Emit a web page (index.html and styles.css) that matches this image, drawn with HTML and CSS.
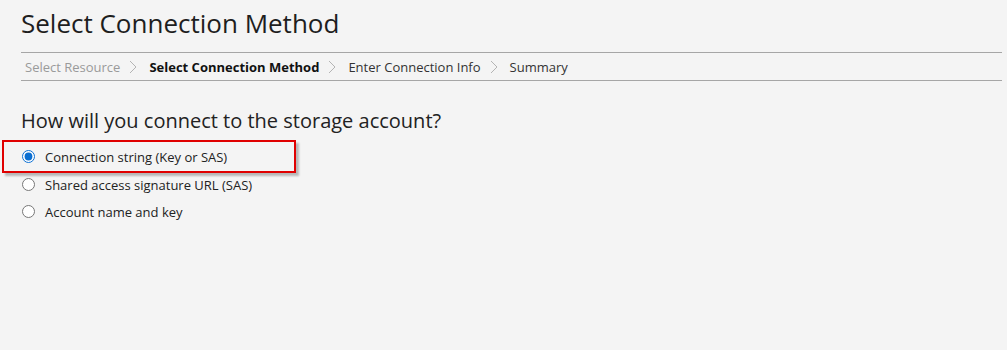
FILE: index.html
```html
<!DOCTYPE html>
<html>
<head>
<meta charset="utf-8">
<link rel="stylesheet" href="styles.css">
</head>
<body>
<div class="page">
  <h1 class="title">Select Connection Method</h1>
  <nav class="crumbs">
    <span class="crumb done">Select Resource</span>
    <svg class="chev" width="8" height="14" viewBox="0 0 8 14"><path d="M1 1 L7 7 L1 13" fill="none" stroke="#b4b4b4" stroke-width="1"/></svg>
    <span class="crumb current">Select Connection Method</span>
    <svg class="chev" width="8" height="14" viewBox="0 0 8 14"><path d="M1 1 L7 7 L1 13" fill="none" stroke="#b4b4b4" stroke-width="1"/></svg>
    <span class="crumb">Enter Connection Info</span>
    <svg class="chev" width="8" height="14" viewBox="0 0 8 14"><path d="M1 1 L7 7 L1 13" fill="none" stroke="#b4b4b4" stroke-width="1"/></svg>
    <span class="crumb">Summary</span>
  </nav>
  <h2 class="question">How will you connect to the storage account?</h2>
  <div class="options">
    <label class="option highlighted"><input type="radio" name="m" checked><span>Connection string (Key or SAS)</span></label>
    <label class="option"><input type="radio" name="m"><span>Shared access signature URL (SAS)</span></label>
    <label class="option"><input type="radio" name="m"><span>Account name and key</span></label>
  </div>
</div>
</body>
</html>
```
FILE: styles.css
```css
html, body {
  margin: 0;
  padding: 0;
  background: #f4f4f4;
  height: 100%;
}
body {
  font-family: "Open Sans", "Noto Sans", sans-serif;
  color: #222;
}
.page {
  padding: 0 5px 0 21px;
}
.title {
  margin: 0;
  padding-top: 4px;
  font-size: 26px;
  font-weight: 400;
  line-height: 38px;
  height: 48px;
  color: #1e1e1e;
}
.crumbs {
  display: flex;
  align-items: center;
  border-top: 1px solid #a6a6a6;
  border-bottom: 1px solid #a6a6a6;
  height: 27px;
  padding-left: 4px;
  font-size: 13px;
}
.crumb {
  color: #333;
  white-space: nowrap;
}
.crumb.done {
  color: #9a9a9a;
}
.crumb.current {
  font-weight: 700;
  color: #111;
}
.chev {
  margin: 0 12px 0 9px;
  flex: none;
}
.question {
  margin: 0;
  padding-top: 27px;
  font-size: 20px;
  font-weight: 400;
  line-height: 26px;
  color: #222;
}
.options {
  display: flex;
  flex-direction: column;
  padding-top: 8px;
}
.option {
  display: flex;
  align-items: center;
  height: 27px;
  font-size: 13px;
  color: #222;
  width: max-content;
}
.option input {
  margin: 0 10px 0 1px;
  width: 13px;
  height: 13px;
  accent-color: #0a6ed1;
}
.option.highlighted {
  margin-left: -19px;
  padding-left: 17px;
  padding-right: 67px;
  border: 2px solid #e00000;
  height: 29px;
  margin-top: -2px;
  margin-bottom: -2px;
  box-shadow: 3px 3px 2px rgba(0,0,0,0.25);
}
```
